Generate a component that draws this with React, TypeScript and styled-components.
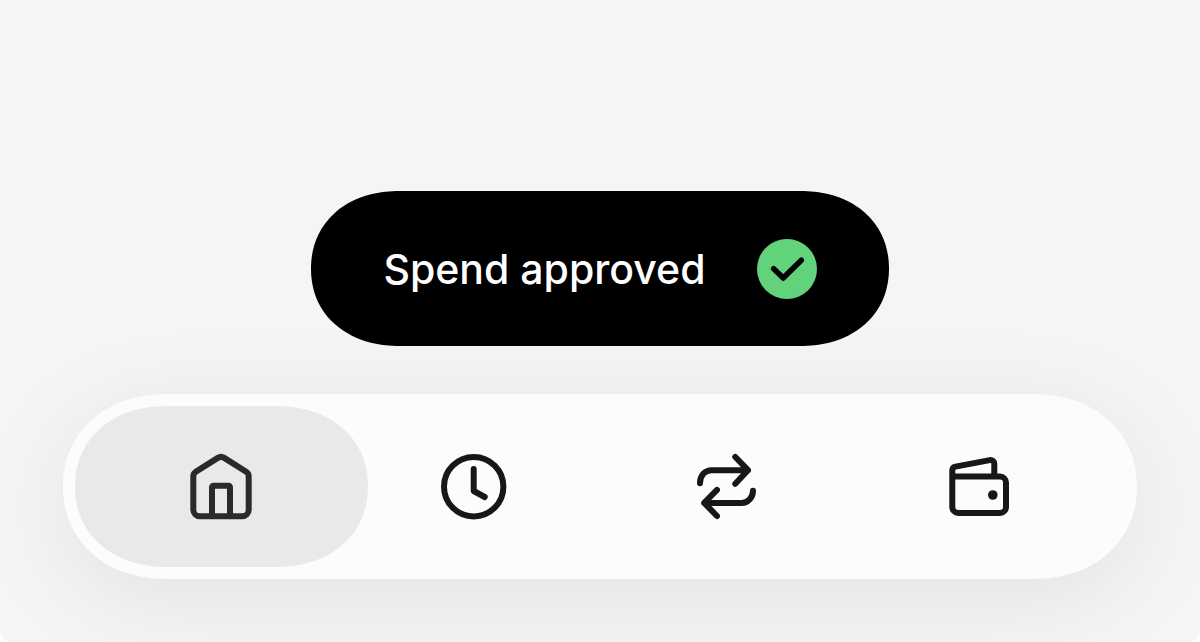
import React from "react";
import styled, { createGlobalStyle } from "styled-components";

const GlobalStyle = createGlobalStyle`
  *, *::before, *::after { box-sizing: border-box; }
  body { margin: 0; background: #ffffff; font-family: Inter, "Liberation Sans", sans-serif; }
`;

const Screen = styled.main`
  min-height: 100vh;
  padding: 63px;
  display: flex;
  flex-direction: column;
  align-items: center;
  justify-content: flex-end;
  gap: 48px;
  overflow: hidden;
  background: #f5f5f5;
  border-radius: 0 0 12px 12px;
`;

const Toast = styled.div`
  display: flex;
  align-items: center;
  gap: 51px;
  padding: 48px 72px 47px;
  border-radius: 88px / 50%;
  corner-shape: superellipse(1.1);
  background: #000000;
  color: #ffffff;
  position: relative;
  z-index: 1;
`;

const ToastText = styled.span`
  font-size: 41px;
  line-height: 60px;
  font-weight: 500;
  white-space: nowrap;
`;

const Badge = styled.svg`
  display: block;
  width: 60px;
  height: 60px;
  flex: none;
`;

const TabBar = styled.nav`
  align-self: stretch;
  display: flex;
  padding: 12px 32px;
  border-radius: 105px / 50%;
  corner-shape: superellipse(1.1);
  background: #fcfcfc;
  box-shadow: 0 20px 100px rgba(0, 0, 0, 0.08);
`;

const Tab = styled.button<{ $active?: boolean }>`
  flex: 1;
  min-width: 0;
  height: 161px;
  margin: 0 -20px;
  padding: 0;
  display: flex;
  align-items: center;
  justify-content: center;
  border: 0;
  border-radius: 92px / 50%;
  corner-shape: superellipse(1.1);
  background: ${(p) => (p.$active ? "#e9e9e9" : "transparent")};
  color: ${(p) => (p.$active ? "#2a2a2a" : "#171717")};
  cursor: pointer;
`;

const Icon = styled.svg`
  display: block;
  width: 72px;
  height: 72px;
  fill: none;
  stroke: currentColor;
  stroke-width: 6;
  stroke-linecap: round;
  stroke-linejoin: round;
`;

const HomeIcon = () => (
  <Icon viewBox="0 0 72 72" aria-hidden="true">
    <path d="M8.300 25.400a5.500 5.500 0 0 1 2.500-4.600L32.800 6.900a6 6 0 0 1 6.400 0L61.200 20.800a5.500 5.500 0 0 1 2.500 4.600v33.300a6.500 6.500 0 0 1-6.500 6.500H14.800a6.500 6.500 0 0 1-6.500-6.500z" />
    <path d="M27 65V36.200a1.500 1.500 0 0 1 1.500-1.500h15a1.500 1.500 0 0 1 1.500 1.500V65" strokeLinecap="butt" />
  </Icon>
);

const ClockIcon = () => (
  <Icon viewBox="0 0 72 72" aria-hidden="true">
    <circle cx="35.700" cy="35.700" r="29.700" />
    <path d="M35.700 18v22l11 6" />
  </Icon>
);

const TransferIcon = () => (
  <Icon viewBox="0 0 72 72" aria-hidden="true">
    <path d="M45.300 6 58 19.200 45.300 32.700M58 19.200H21.500C15 19.200 10 24.500 10 32.200" />
    <path d="M27 38.900 14.200 51.900 27 65M14.200 51.900H51.500C58 51.900 63 46.500 63 39.700" />
  </Icon>
);

const WalletIcon = () => (
  <Icon viewBox="0 0 72 72" aria-hidden="true">
    <path d="M9.300 25.500H57a6 6 0 0 1 6 6V56a6 6 0 0 1-6 6H15.300a6 6 0 0 1-6-6V19.500a4 4 0 0 1 3.200-3.900L46.800 9.100a3.800 3.800 0 0 1 4.500 3.700V25.300" />
    <circle cx="49.800" cy="44" r="4.800" fill="currentColor" stroke="none" />
  </Icon>
);

const tabs = [
  { label: "Home", Glyph: HomeIcon, active: true },
  { label: "History", Glyph: ClockIcon, active: false },
  { label: "Transfer", Glyph: TransferIcon, active: false },
  { label: "Wallet", Glyph: WalletIcon, active: false },
];

export default function App() {
  return (
    <>
      <GlobalStyle />
      <Screen>
        <Toast role="status">
          <ToastText>Spend approved</ToastText>
          <Badge viewBox="0 0 60 60" aria-hidden="true">
            <circle cx="30" cy="30" r="30" fill="#62d37a" />
            <path
              d="M16.700 29.700 26.200 39 44.300 21.200"
              fill="none"
              stroke="#000000"
              strokeWidth="5.500"
              strokeLinecap="round"
              strokeLinejoin="round"
            />
          </Badge>
        </Toast>
        <TabBar aria-label="Main">
          {tabs.map(({ label, Glyph, active }) => (
            <Tab
              key={label}
              type="button"
              aria-label={label}
              aria-current={active ? "page" : undefined}
              $active={active}
            >
              <Glyph />
            </Tab>
          ))}
        </TabBar>
      </Screen>
    </>
  );
}
